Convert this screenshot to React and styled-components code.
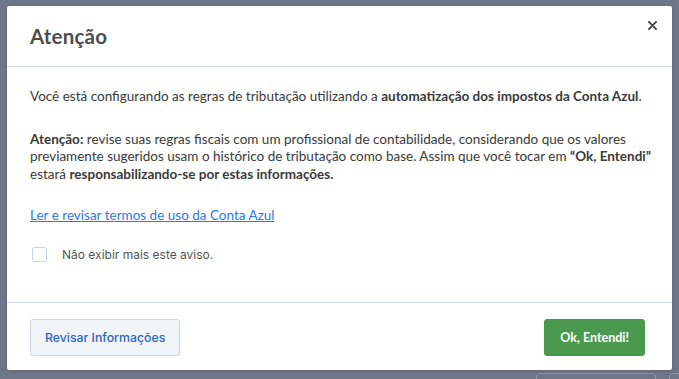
import React from 'react';
import styled, { createGlobalStyle } from 'styled-components';

const GlobalStyle = createGlobalStyle`
  html, body {
    margin: 0;
    padding: 0;
  }
  body {
    font-family: "Lato", "Noto Sans", sans-serif;
  }
`

const StyledBackdrop = styled.div`
  width: 679px;
  height: 379px;
  box-sizing: border-box;
  background-color: #6e778a;
  padding: 6px 7px 0 7px;
  position: relative;
  overflow: hidden;
`
const StyledBehindButton = styled.div`
  position: absolute;
  top: 373px;
  left: ${props => props.left}px;
  width: ${props => props.width}px;
  height: 30px;
  border: 1px solid #8f98aa;
  border-radius: 4px;
`
const StyledModal = styled.div`
  position: relative;
  width: 665px;
  height: 364px;
  background-color: #ffffff;
  border-radius: 2px;
  display: flex;
  flex-direction: column;
  box-shadow: 0 1px 4px rgba(0, 0, 0, 0.15);
`
const StyledHeader = styled.div`
  height: 60px;
  flex-shrink: 0;
  display: flex;
  align-items: center;
  justify-content: space-between;
  padding: 0 13px 0 23px;
  border-bottom: 1px solid #d3dbe4;
`
const StyledTitle = styled.h2`
  margin: 0;
  font-family: "Lato", sans-serif;
  font-size: 20.5px;
  font-weight: 700;
  color: #4d4d4d;
  letter-spacing: 0.2px;
`
const StyledClose = styled.button`
  align-self: flex-start;
  margin-top: 12px;
  border: none;
  background: none;
  padding: 0;
  width: 14px;
  height: 14px;
  display: flex;
  align-items: center;
  justify-content: center;
  cursor: pointer;
`
const StyledBody = styled.div`
  flex: 1;
  padding: 21px 10px 0 23px;
  border-bottom: 1px solid #d3dbe4;
  color: #3a3a3a;
  font-size: 13.5px;
  line-height: 17.5px;
`
const StyledParagraph = styled.p`
  margin: 0 0 ${props => props.gap}px 0;
`
const StyledLink = styled.a`
  display: inline-block;
  margin-top: 4px;
  color: #2a7ae2;
  text-decoration: underline;
  cursor: pointer;
`
const StyledCheckRow = styled.label`
  display: flex;
  align-items: center;
  gap: 15px;
  margin-top: 21px;
  margin-left: 2px;
  font-family: "Inter", sans-serif;
  font-size: 12px;
  color: #555;
`
const StyledCheckbox = styled.span`
  width: 13px;
  height: 13px;
  border: 1px solid #c9d1dc;
  border-radius: 3px;
  background: #fff;
`
const StyledFooter = styled.div`
  display: flex;
  justify-content: space-between;
  padding: 16px 27px 14px 23px;
`
const StyledButton = styled.button`
  height: 37px;
  padding: 0 ${props => props.primary ? 15 : 14}px;
  border-radius: 3px;
  font-size: ${props => props.primary ? '12.5px' : '12.3px'};
  font-weight: ${props => props.primary ? 700 : 500};
  font-family: ${props => props.primary ? '"Lato", sans-serif' : '"Inter", sans-serif'};
  cursor: pointer;
  border: 1px solid ${props => props.primary ? '#48984d' : '#cdd6e1'};
  background-color: ${props => props.primary ? '#4a994f' : '#f1f4f9'};
  color: ${props => props.primary ? '#ffffff' : '#2c68bf'};
`

export default function App() {
  return (
    <StyledBackdrop>
      <GlobalStyle />
      <StyledBehindButton left={536} width={118} />
      <StyledBehindButton left={669} width={40} />
      <StyledModal>
        <StyledHeader>
          <StyledTitle>Atenção</StyledTitle>
          <StyledClose aria-label="Fechar">
            <svg width="9" height="9" viewBox="0 0 10 10">
              <path d="M1 1 L9 9 M9 1 L1 9" stroke="#3f3f3f" strokeWidth="2" strokeLinecap="round" />
            </svg>
          </StyledClose>
        </StyledHeader>
        <StyledBody>
          <StyledParagraph gap={25}>
            Você está configurando as regras de tributação utilizando a <b>automatização dos impostos da Conta Azul</b>.
          </StyledParagraph>
          <StyledParagraph gap={20}>
            <b>Atenção:</b> revise suas regras fiscais com um profissional de contabilidade, considerando que os valores<br />
            previamente sugeridos usam o histórico de tributação como base. Assim que você tocar em <b>“Ok, Entendi”</b><br />
            estará <b>responsabilizando-se por estas informações.</b>
          </StyledParagraph>
          <StyledLink>Ler e revisar termos de uso da Conta Azul</StyledLink>
          <StyledCheckRow>
            <StyledCheckbox />
            Não exibir mais este aviso.
          </StyledCheckRow>
        </StyledBody>
        <StyledFooter>
          <StyledButton>Revisar Informações</StyledButton>
          <StyledButton primary>Ok, Entendi!</StyledButton>
        </StyledFooter>
      </StyledModal>
    </StyledBackdrop>
  );
}
